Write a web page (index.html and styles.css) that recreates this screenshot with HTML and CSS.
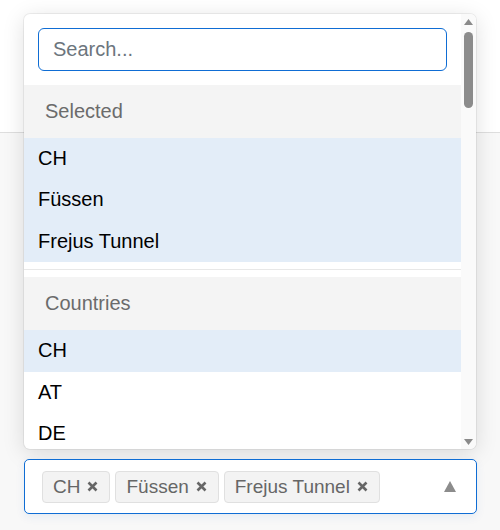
FILE: index.html
```html
<!DOCTYPE html>
<html lang="en">
<head>
    <meta charset="UTF-8">
    <title>Multi select</title>
    <link rel="stylesheet" href="styles.css">
</head>
<body>
<div class="picker">
    <div class="menu">
        <div class="menu-body">
            <div class="search-wrap">
                <input class="search" type="text" placeholder="Search...">
            </div>
            <div class="group">
                <div class="group-title">Selected</div>
                <div class="option selected">CH</div>
                <div class="option selected">Füssen</div>
                <div class="option selected">Frejus Tunnel</div>
            </div>
            <div class="divider"></div>
            <div class="group">
                <div class="group-title">Countries</div>
                <div class="option selected">CH</div>
                <div class="option">AT</div>
                <div class="option">DE</div>
            </div>
        </div>
        <div class="scrollbar">
            <svg class="sb-arrow" width="9" height="6" viewBox="0 0 9 6"><polygon points="4.5,0 9,6 0,6" fill="#8a8a8a"/></svg>
            <div class="sb-track"><div class="sb-thumb"></div></div>
            <svg class="sb-arrow" width="9" height="6" viewBox="0 0 9 6"><polygon points="0,0 9,0 4.5,6" fill="#8a8a8a"/></svg>
        </div>
    </div>
    <div class="control">
        <span class="chip">CH<svg class="chip-x" width="11" height="11" viewBox="0 0 11 11"><path d="M1.5 1.5L9.5 9.5M9.5 1.5L1.5 9.5" stroke="#666" stroke-width="2.6"/></svg></span>
        <span class="chip">Füssen<svg class="chip-x" width="11" height="11" viewBox="0 0 11 11"><path d="M1.5 1.5L9.5 9.5M9.5 1.5L1.5 9.5" stroke="#666" stroke-width="2.6"/></svg></span>
        <span class="chip">Frejus Tunnel<svg class="chip-x" width="11" height="11" viewBox="0 0 11 11"><path d="M1.5 1.5L9.5 9.5M9.5 1.5L1.5 9.5" stroke="#666" stroke-width="2.6"/></svg></span>
        <svg class="caret" width="12" height="11" viewBox="0 0 12 11"><polygon points="6,0 12,11 0,11" fill="#8c8c8c"/></svg>
    </div>
</div>
</body>
</html>
```

FILE: styles.css
```css
*{margin: 0;padding: 0;box-sizing: border-box;}
body{
    font-family: "Liberation Sans", Arial, sans-serif;
    font-size: 20px;
    background: linear-gradient(#fff 0, #fff 132px, #dedede 132px, #dedede 133px, #f8f8f8 133px);
    min-height: 530px;
    padding: 14px 23px 0 24px;
}
.picker{width: 453px;}
.menu{
    display: flex;
    width: 452px;
    height: 435px;
    background: #fff;
    border-radius: 6px;
    overflow: hidden;
    box-shadow: 0 0 0 1px rgba(0,0,0,0.06), 0 4px 22px rgba(0,0,0,0.13);
}
.menu-body{flex: 1;overflow: hidden;}
.search-wrap{padding: 14px;}
.search{
    display: block;
    width: 100%;
    height: 43px;
    border: 1px solid #0f6dd4;
    border-radius: 6px;
    padding: 0 14px;
    font: inherit;
    outline: none;
}
.search::placeholder{color: #6c757d;}
.group-title{
    background: #f4f4f4;
    color: #6b6b6b;
    line-height: 23px;
    padding: 14.8px 21px;
}
.option{
    line-height: 23px;
    padding: 9.3px 14px;
    color: #000;
}
.option.selected{background: #e3edf8;}
.divider{height: 1px;background: #e8e8e8;margin: 7px 0;}
.scrollbar{
    width: 15px;
    background: #fafafa;
    display: flex;
    flex-direction: column;
    align-items: center;
    padding: 5px 0 4px;
}
.sb-arrow{display: block;flex: none;}
.sb-track{flex: 1;width: 100%;padding: 7px 3px;}
.sb-thumb{height: 76px;background: #8c8c8c;border-radius: 5px;}
.control{
    margin-top: 10px;
    height: 55px;
    border: 1px solid #0f6dd4;
    border-radius: 5px;
    background: #fff;
    box-shadow: 0 3px 10px rgba(15,90,180,0.08);
    display: flex;
    align-items: center;
    gap: 5px;
    padding: 0 20px 0 17px;
}
.chip{
    display: inline-flex;
    align-items: center;
    height: 32px;
    padding: 0 11px 0 10px;
    background: #f3f3f3;
    border: 1px solid #e0e0e0;
    border-radius: 4px;
    color: #666;
    font-size: 19px;
}
.chip-x{margin-left: 7px;}
.caret{margin-left: auto;}
```
